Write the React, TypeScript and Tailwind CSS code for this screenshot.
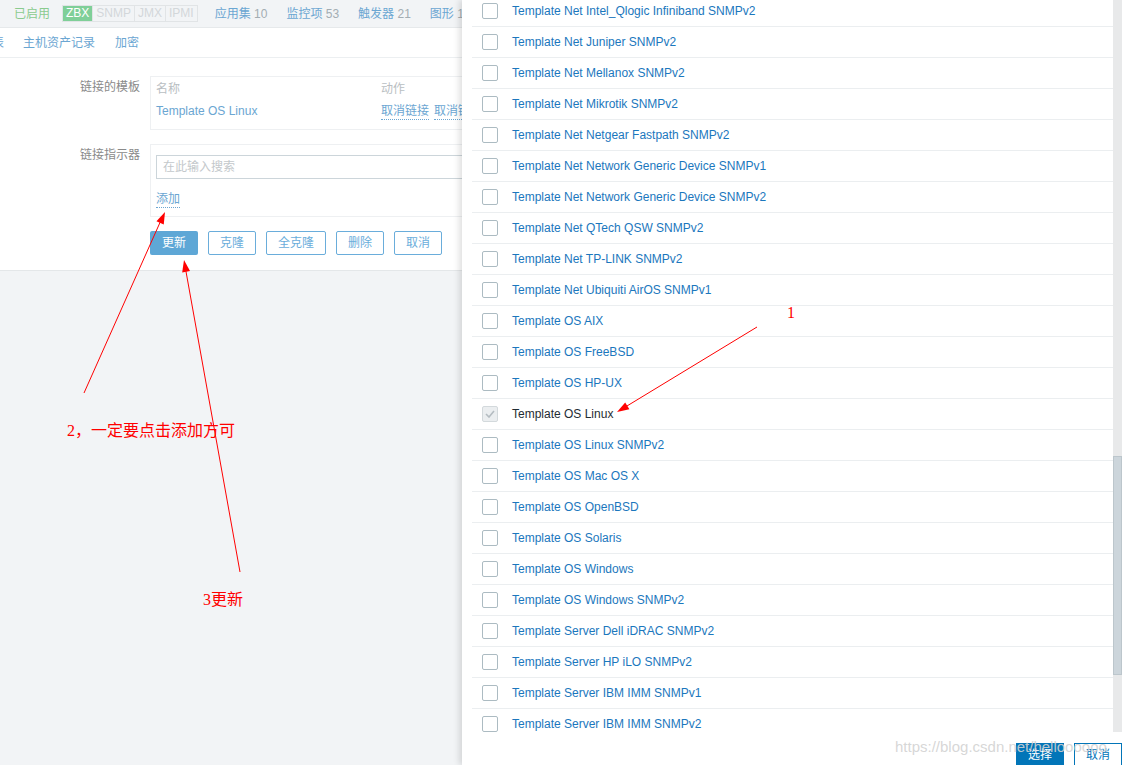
import React from 'react'

const templates = [
  'Template Net Intel_Qlogic Infiniband SNMPv2',
  'Template Net Juniper SNMPv2',
  'Template Net Mellanox SNMPv2',
  'Template Net Mikrotik SNMPv2',
  'Template Net Netgear Fastpath SNMPv2',
  'Template Net Network Generic Device SNMPv1',
  'Template Net Network Generic Device SNMPv2',
  'Template Net QTech QSW SNMPv2',
  'Template Net TP-LINK SNMPv2',
  'Template Net Ubiquiti AirOS SNMPv1',
  'Template OS AIX',
  'Template OS FreeBSD',
  'Template OS HP-UX',
  'Template OS Linux',
  'Template OS Linux SNMPv2',
  'Template OS Mac OS X',
  'Template OS OpenBSD',
  'Template OS Solaris',
  'Template OS Windows',
  'Template OS Windows SNMPv2',
  'Template Server Dell iDRAC SNMPv2',
  'Template Server HP iLO SNMPv2',
  'Template Server IBM IMM SNMPv1',
  'Template Server IBM IMM SNMPv2',
]

const LINKED = 'Template OS Linux'

// ─── Host edit page (behind the popup) ─────────────────────────────────────
function HostForm() {
  return (
    <div className="flex flex-col bg-[#f2f4f6]" style={{ minHeight: 765 }}>
      {/* status / counters bar */}
      <div className="flex h-[28px] items-center border-b border-[#e6e9eb] bg-[#f2f4f6] pl-[14px] text-[12px]">
        <span className="text-[#8acb8e]">已启用</span>
        <div className="ml-[12px] flex h-[17px] items-stretch border border-[#e1e4e6] text-[12px] leading-[15px]">
          <span className="bg-[#7fcf98] px-[3px] text-white">ZBX</span>
          <span className="border-l border-[#e1e4e6] px-[3px] text-[#d3d7da]">SNMP</span>
          <span className="border-l border-[#e1e4e6] px-[3px] text-[#d3d7da]">JMX</span>
          <span className="border-l border-[#e1e4e6] px-[3px] text-[#d3d7da]">IPMI</span>
        </div>
        <span className="ml-[17px] text-[#6ba6d2]">应用集 <span className="text-[#a3adb3]">10</span></span>
        <span className="ml-[19px] text-[#6ba6d2]">监控项 <span className="text-[#a3adb3]">53</span></span>
        <span className="ml-[19px] text-[#6ba6d2]">触发器 <span className="text-[#a3adb3]">21</span></span>
        <span className="ml-[19px] text-[#6ba6d2]">图形 <span className="text-[#a3adb3]">1</span></span>
      </div>

      {/* tabs */}
      <div className="flex h-[30px] items-center gap-[20px] border-b border-[#eceff1] bg-white text-[12px] text-[#6ba6d2]">
        <span className="-ml-[8px]">表</span>
        <span className="-ml-[1px]">主机资产记录</span>
        <span>加密</span>
      </div>

      {/* form */}
      <div className="grid grid-cols-[140px_1fr] gap-x-[10px] gap-y-[14px] border-b border-[#e4e7e9] bg-white pb-[15px] pt-[18px] text-[12px]">
        <div className="mt-[1px] text-right leading-[20px] text-[#8a8a8a]">链接的模板</div>
        <div className="border border-[#eef0f2] px-[5px] pb-[8px] pt-[2px]">
          <div className="flex h-[20px] items-center text-[#b9bec2]">
            <span className="w-[225px]">名称</span>
            <span>动作</span>
          </div>
          <div className="mt-[2px] flex h-[20px] items-center text-[#6ba6d2]">
            <span className="w-[225px]">Template OS Linux</span>
            <span className="border-b border-dotted border-[#6ba6d2] leading-[16px]">取消链接</span>
            <span className="ml-[5px] border-b border-dotted border-[#6ba6d2] leading-[16px]">取消链接并清理</span>
          </div>
        </div>

        <div className="mt-[1px] text-right leading-[20px] text-[#8a8a8a]">链接指示器</div>
        <div className="border border-[#eef0f2] px-[5px] pb-[7px] pt-[10px]">
          <div className="flex h-[24px] items-center border border-[#ccd5da] px-[6px] text-[#c3c8cb]">在此输入搜索</div>
          <div className="mt-[10px] flex h-[20px] items-center">
            <span className="border-b border-dotted border-[#6ba6d2] leading-[16px] text-[#6ba6d2]">添加</span>
          </div>
        </div>

        <div />
        <div className="mt-[0px] flex gap-[10px]">
          <button type="button" className="h-[24px] w-[48px] rounded-[2px] bg-[#5ea7d6] text-white">更新</button>
          <button type="button" className="h-[24px] w-[48px] rounded-[2px] border border-[#6aaddb] text-[#6aaddb]">克隆</button>
          <button type="button" className="h-[24px] w-[60px] rounded-[2px] border border-[#6aaddb] text-[#6aaddb]">全克隆</button>
          <button type="button" className="h-[24px] w-[48px] rounded-[2px] border border-[#6aaddb] text-[#6aaddb]">删除</button>
          <button type="button" className="h-[24px] w-[48px] rounded-[2px] border border-[#6aaddb] text-[#6aaddb]">取消</button>
        </div>
      </div>
      <div className="flex-1" />
    </div>
  )
}

// ─── Checkbox ──────────────────────────────────────────────────────────────
function Box({ checked }: { checked: boolean }) {
  if (checked) {
    return (
      <span className="flex h-[16px] w-[16px] shrink-0 items-center justify-center rounded-[2px] border border-[#d3d9dc] bg-[#ebeef0]">
        <svg width="10" height="8" viewBox="0 0 10 8" fill="none">
          <path d="M1 4l3 3 5-6" stroke="#b4bcc1" strokeWidth="1.6" />
        </svg>
      </span>
    )
  }
  return <span className="h-[16px] w-[16px] shrink-0 rounded-[2px] border border-[#acbbc2] bg-white" />
}

// ─── Template picker popup ────────────────────────────────────────────────
function TemplatePopup() {
  return (
    <div className="absolute bottom-0 left-[462px] right-0 top-0 flex flex-col bg-white shadow-[-3px_0_6px_rgba(0,0,0,0.12)]">
      <div className="flex min-h-0 flex-1">
        <div className="min-w-0 flex-1 overflow-hidden pl-[10px]">
          <div className="-mt-[4px]">
            {templates.map(t => {
              const on = t === LINKED
              return (
                <div key={t} className="flex h-[31px] items-center gap-[14px] border-b border-[#ebeef0] pl-[10px]">
                  <Box checked={on} />
                  <span className={on ? 'text-[12px] text-[#1f2c33]' : 'text-[12px] text-[#1b77bd]'}>{t}</span>
                </div>
              )
            })}
          </div>
        </div>
        {/* scrollbar */}
        <div className="relative mr-[7px] w-[9px] bg-[#e8e9ea]">
          <div className="absolute left-0 right-0 top-[456px] h-[219px] border border-[#bcc6cc] bg-[#ccd5db]" />
        </div>
      </div>
      <div className="flex h-[33px] shrink-0 items-start justify-end gap-[10px] pr-[7px] pt-[11px]">
        <button type="button" className="h-[24px] w-[48px] bg-[#0275b8] text-[12px] leading-[22px] text-white">选择</button>
        <button type="button" className="h-[24px] w-[48px] border border-[#0275b8] bg-white text-[12px] leading-[22px] text-[#0275b8]">取消</button>
      </div>
    </div>
  )
}

// ─── Red hand-drawn annotations ────────────────────────────────────────────
function Annotations() {
  return (
    <div className="pointer-events-none absolute inset-0">
      <svg width="1129" height="765" className="absolute left-0 top-0">
        <line x1="757" y1="327" x2="622" y2="409" stroke="#ff0000" strokeWidth="1" />
        <polygon points="617,412 625.2,402.4 629.4,409.2" fill="#ff0000" />
        <line x1="84" y1="393" x2="162" y2="218" stroke="#ff0000" strokeWidth="1" />
        <polygon points="165,212 163.75,224.6 156.45,221.3" fill="#ff0000" />
        <line x1="240" y1="572" x2="185" y2="266" stroke="#ff0000" strokeWidth="1" />
        <polygon points="184,260 190,271.1 182.2,272.5" fill="#ff0000" />
      </svg>
      <span className="absolute left-[787px] top-[303px] text-[16px] leading-[20px] text-[#ff0000]" style={{ fontFamily: '"Liberation Serif", "Noto Sans CJK SC", serif' }}>1</span>
      <span className="absolute left-[67px] top-[421px] text-[16px] leading-[20px] text-[#ff0000]" style={{ fontFamily: '"Liberation Serif", "Noto Sans CJK SC", serif' }}>2，一定要点击添加方可</span>
      <span className="absolute left-[203px] top-[590px] text-[16px] leading-[20px] text-[#ff0000]" style={{ fontFamily: '"Liberation Serif", "Noto Sans CJK SC", serif' }}>3更新</span>
      <span className="absolute left-[895px] top-[736px] text-[15px] leading-[22px] text-[#d2d2d2]/90" style={{ fontFamily: '"Liberation Sans", sans-serif' }}>https://blog.csdn.net/helloooooo</span>
    </div>
  )
}

export default function App() {
  return (
    <div
      className="relative h-[765px] w-[1129px] overflow-hidden"
      style={{ fontFamily: '"Liberation Sans", Arial, "Noto Sans CJK SC", sans-serif' }}
    >
      <HostForm />
      <TemplatePopup />
      <Annotations />
    </div>
  )
}
